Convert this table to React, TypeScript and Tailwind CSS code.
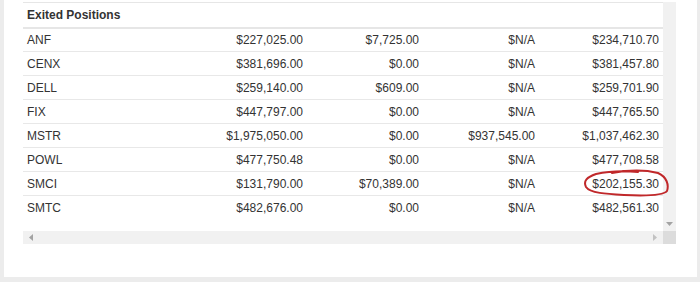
const rows = [
  ["ANF", "$227,025.00", "$7,725.00", "$N/A", "$234,710.70"],
  ["CENX", "$381,696.00", "$0.00", "$N/A", "$381,457.80"],
  ["DELL", "$259,140.00", "$609.00", "$N/A", "$259,701.90"],
  ["FIX", "$447,797.00", "$0.00", "$N/A", "$447,765.50"],
  ["MSTR", "$1,975,050.00", "$0.00", "$937,545.00", "$1,037,462.30"],
  ["POWL", "$477,750.48", "$0.00", "$N/A", "$477,708.58"],
  ["SMCI", "$131,790.00", "$70,389.00", "$N/A", "$202,155.30"],
  ["SMTC", "$482,676.00", "$0.00", "$N/A", "$482,561.30"],
];

function ScribbleCircle() {
  return (
    <svg
      className="pointer-events-none absolute right-[-11px] top-[-6px] h-[30px] w-[88px]"
      viewBox="0 0 88 30"
      fill="none"
    >
      <path
        d="M30 4 C46 1 64 1 76 4 C85 8 87 16 85 22 C81 27 62 27 42 26 C24 25 8 24 4 18 C1 12 5 8 14 5 C28 2 44 2 56 3"
        stroke="#c0282a"
        strokeWidth="2"
        strokeLinecap="round"
      />
    </svg>
  );
}

export default function App() {
  return (
    <div className="h-[282px] w-[700px] bg-[#ececec] pl-1 pr-[3px] font-['Liberation_Sans',Arial,sans-serif] text-[12px] text-[#333]">
      <div className="h-[277px] bg-white pl-[19px] pt-[2px]">
        <div className="w-[653px]">
          <div className="flex h-[229px]">
            <table className="w-[640px] table-fixed border-collapse self-start">
              <colgroup>
                <col className="w-[160px]" />
                <col className="w-[124px]" />
                <col className="w-[116px]" />
                <col className="w-[116px]" />
                <col className="w-[124px]" />
              </colgroup>
              <thead>
                <tr className="h-[25px] border-t border-b-2 border-[#e6e6e6]">
                  <th className="px-1 text-left font-bold" colSpan={5}>
                    Exited Positions
                  </th>
                </tr>
              </thead>
              <tbody>
                {rows.map((r, i) => (
                  <tr
                    key={r[0]}
                    className={i < rows.length - 1 ? "h-[24px] border-b border-[#e8e8e8]" : "h-[24px]"}
                  >
                    <td className="px-1 text-left">{r[0]}</td>
                    <td className="px-1 text-right">{r[1]}</td>
                    <td className="px-1 text-right">{r[2]}</td>
                    <td className="px-1 text-right">{r[3]}</td>
                    <td className="px-1 text-right">
                      {r[0] === "SMCI" ? (
                        <span className="relative inline-block">
                          {r[4]}
                          <ScribbleCircle />
                        </span>
                      ) : (
                        r[4]
                      )}
                    </td>
                  </tr>
                ))}
              </tbody>
            </table>
            {/* vertical scrollbar */}
            <div className="flex w-[13px] flex-col justify-end bg-[#f1f1f1] pb-[5px]">
              <svg className="mx-auto h-[4px] w-[7px]" viewBox="0 0 7 4">
                <path d="M0 0 H7 L3.5 4 Z" fill="#a3a3a3" />
              </svg>
            </div>
          </div>
          {/* horizontal scrollbar */}
          <div className="flex h-[13px]">
            <div className="flex w-[640px] items-center justify-between bg-[#f1f1f1] px-[6px]">
              <svg className="h-[7px] w-[4px]" viewBox="0 0 4 7">
                <path d="M4 0 V7 L0 3.5 Z" fill="#a3a3a3" />
              </svg>
              <svg className="h-[7px] w-[4px]" viewBox="0 0 4 7">
                <path d="M0 0 V7 L4 3.5 Z" fill="#c2c2c2" />
              </svg>
            </div>
            <div className="w-[13px] bg-[#dcdcdc]" />
          </div>
        </div>
      </div>
    </div>
  );
}
